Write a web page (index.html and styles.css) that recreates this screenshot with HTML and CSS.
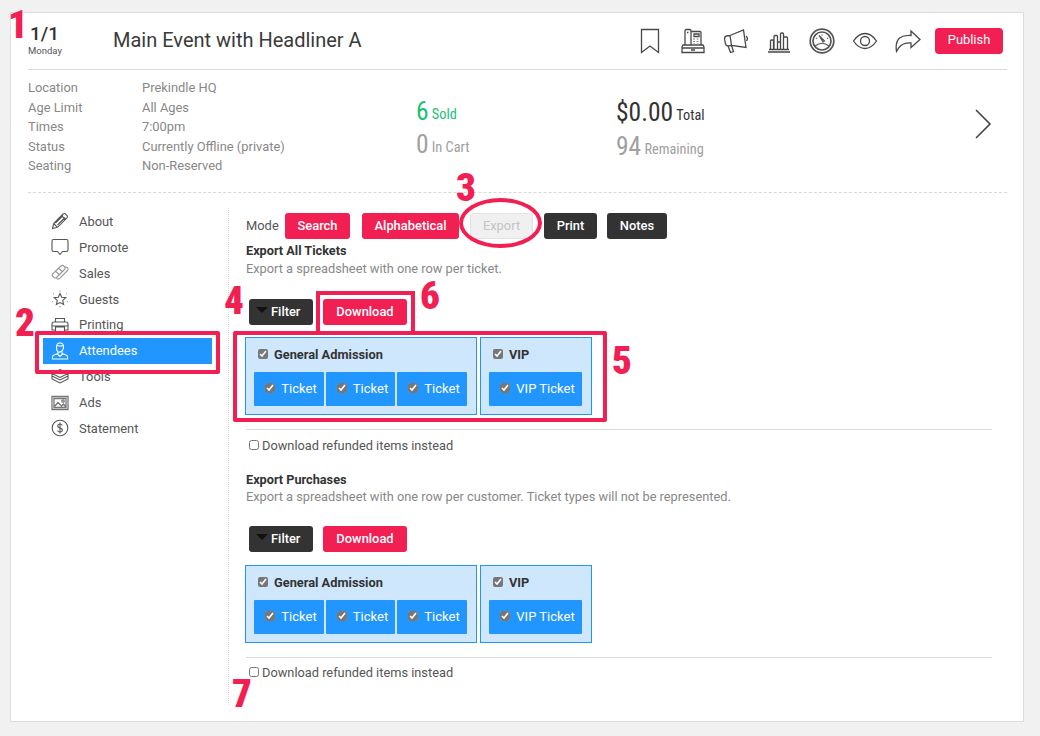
FILE: index.html
```html
<!DOCTYPE html>
<html lang="en">
<head>
<meta charset="utf-8">
<title>Main Event with Headliner A</title>
<link rel="stylesheet" href="styles.css">
</head>
<body>
<div class="card">
  <header class="head">
    <div class="date"><div class="date-num">1/1</div><div class="date-day">Monday</div></div>
    <h1 class="title">Main Event with Headliner A</h1>
    <div class="tools">
      <svg class="ico" viewBox="0 0 26 26"><path d="M4.500 1.500h17v23l-8.500-6.500-8.500 6.500z"/></svg>
      <svg class="ico" viewBox="0 0 26 26"><path d="M5 17V3q0-1.500 1.500-1.500h3Q11 1.500 11 3v14M11 3.500h9q1 0 1 1V17M3 17h20l1 2v5.500H2V19zM2 20h22M14 6h5v2.500h-5zM7 4.500h1.500M11 22h4"/><path class="dots" d="M13 11h2m1.500 0h2M13 13.500h2m1.500 0h2M13 16h2m1.500 0h2"/></svg>
      <svg class="ico" viewBox="0 0 26 26"><path d="M1.500 10.500q0-2 2-2.500l3.500-.5 1.500 10-3.500.5q-2 0-2.500-2zM7 7.500L20.500 2l2.500 17.500-14.500-2zM23 8q2.500 2 .5 5M5 18l2.500 6.500 3-1-2-6"/></svg>
      <svg class="ico" viewBox="0 0 26 26"><path d="M2 24h22M4.500 21v-8q0-1 1-1h1q1 0 1 1v8M8 21V8.500q0-1 1-1h1.500q1 0 1 1V21M11.500 14h2q1 0 1 1v6M14.500 21V6q0-1 1-1h1q1 0 1 1v15M17.500 9h3q1 0 1 1v11M3 21.500h20"/></svg>
      <svg class="ico gauge" viewBox="0 0 26 26"><circle cx="13" cy="13" r="11.800"/><circle cx="13" cy="13" r="9"/><path class="thin" d="M6 18q7-5.500 14 0M10 7.500l4 6.500 1.500-1zM7 10l1 .6M19 10l-1 .6M13 6.500v1"/></svg>
      <svg class="ico" viewBox="0 0 26 26"><path d="M1.500 13Q6.500 5.500 13 5.500T24.500 13Q19.500 20.500 13 20.500T1.500 13z"/><circle cx="13" cy="13" r="4.500"/></svg>
      <svg class="ico" viewBox="0 0 26 26"><path d="M16 3l9 8.500-9 8v-4.500q-8-.5-12 4.500l-2.500 4q-1.500-9 3-13.500Q9 7 16 7.500z"/></svg>
      <button class="btn btn-red publish">Publish</button>
    </div>
  </header>

  <section class="info">
    <dl class="facts">
      <dt>Location</dt><dd>Prekindle HQ</dd>
      <dt>Age Limit</dt><dd>All Ages</dd>
      <dt>Times</dt><dd>7:00pm</dd>
      <dt>Status</dt><dd>Currently Offline (private)</dd>
      <dt>Seating</dt><dd>Non-Reserved</dd>
    </dl>
    <div class="stats stats-a">
      <div class="stat green"><b>6</b> <span>Sold</span></div>
      <div class="stat grey"><b>0</b> <span>In Cart</span></div>
    </div>
    <div class="stats stats-b">
      <div class="stat dark"><b>$0.00</b> <span>Total</span></div>
      <div class="stat grey"><b>94</b> <span>Remaining</span></div>
    </div>
    <svg class="chev" viewBox="0 0 18 30"><path d="M2 1l14 14L2 29"/></svg>
  </section>

  <div class="body">
    <nav class="side">
      <a class="nav"><svg class="nico" viewBox="0 0 18 18"><path d="M1.500 16.500l1.200-5L12 2q1.300-1 2.500 0l1.500 1.500q1 1.200 0 2.500l-9.500 9.300zM2.700 11.500l3.800 3.800M10.500 3.500l4 4M4.500 11l7.500-7.500M6.500 13l7.500-7.500"/></svg>About</a>
      <a class="nav"><svg class="nico" viewBox="0 0 18 18"><path d="M2.500 1.500h13q1.500 0 1.500 1.500v9q0 1.500-1.500 1.500h-4L9 16.500l-2.500-3h-4Q1 13.500 1 12V3q0-1.500 1.500-1.500z"/></svg>Promote</a>
      <a class="nav muted"><svg class="nico" viewBox="0 0 18 18"><path d="M1.500 10L10 2q1.500-1.200 2.800 0l.7.7q1.300 1.300 0 2.800L5.500 13.500q-1.300 1-2.500 0L1.500 12q-.8-1 0-2zM5.500 13.800q1 2 2.800 1l8.200-8.300q1.200-1.300 0-2.800L14 2.800M4.500 7l4 4M7.500 4l4 4"/></svg>Sales</a>
      <a class="nav"><svg class="nico" viewBox="0 0 18 18"><path d="M9 3.500l1.700 3.700 4.100.5-3.100 2.700.9 4L9 12.500l-3.600 1.900.9-4-3.100-2.700 4.100-.5z"/><path class="dots" d="M9 .5v1.200M15.800 3.500l-.9.9M2.200 3.500l.9.9M.8 12l1.100-.3M17.200 12l-1.100-.3M9 16v1.500"/></svg>Guests</a>
      <a class="nav"><svg class="nico" viewBox="0 0 18 18"><path d="M4.500 6V2.500h9V6M4.500 14H1V8q0-2 2-2h12q2 0 2 2v6h-3.500M4.500 11h9v6h-9zM1 10h16"/></svg>Printing</a>
      <a class="nav active"><svg class="nico" viewBox="0 0 18 18"><path d="M5.500 5q0-4 3.500-4t3.500 4-3.500 5-3.500-5zM5.800 3.500q3.200 1 6.400 0M7 9.500v2l-4 1.500q-1.500.5-1.500 2v2h15v-2q0-1.500-1.500-2l-4-1.500v-2M6.500 12L9 14.500l2.500-2.500"/></svg>Attendees</a>
      <a class="nav"><svg class="nico" viewBox="0 0 18 18"><path d="M9 1.500L17 5.500 9 9.500 1 5.500zM1 5.500v2.500l8 4 8-4V5.500M1 8v3l8 4 8-4V8"/></svg>Tools</a>
      <a class="nav"><svg class="nico ads" viewBox="0 0 18 18"><path d="M1 2.500h16v13H1zM3 4.500h12v9H3zM3 13l4-4.500 3.500 3.500 2-2L15 13"/><circle cx="12" cy="7" r="1.200"/></svg>Ads</a>
      <a class="nav"><svg class="nico" viewBox="0 0 18 18"><circle cx="9" cy="9" r="7.800"/><path d="M11.300 6.500Q11 5 9 5T6.700 6.700 9 9t2.400 2.300T9 13t-2.400-1.500M9 3.500v11"/></svg>Statement</a>
    </nav>

    <main class="main">
      <div class="mode">
        <span class="mode-label">Mode</span>
        <button class="btn btn-red m-search">Search</button>
        <button class="btn btn-red m-alpha">Alphabetical</button>
        <button class="btn btn-off m-export">Export</button>
        <button class="btn btn-dark m-print">Print</button>
        <button class="btn btn-dark m-notes">Notes</button>
      </div>

      <section class="block">
        <h2 class="b-title">Export All Tickets</h2>
        <p class="b-desc">Export a spreadsheet with one row per ticket.</p>
        <div class="actions">
          <button class="btn btn-dark filter"><i class="caret"></i>Filter</button>
          <button class="btn btn-red download">Download</button>
        </div>
        <div class="groups">
          <div class="group ga">
            <label class="g-head"><input type="checkbox" checked>General Admission</label>
            <div class="tickets">
              <label class="ticket t1"><input type="checkbox" checked>Ticket</label>
              <label class="ticket t2"><input type="checkbox" checked>Ticket</label>
              <label class="ticket t3"><input type="checkbox" checked>Ticket</label>
            </div>
          </div>
          <div class="group vip">
            <label class="g-head"><input type="checkbox" checked>VIP</label>
            <div class="tickets">
              <label class="ticket t4"><input type="checkbox" checked>VIP Ticket</label>
            </div>
          </div>
        </div>
        <label class="refund"><input type="checkbox">Download refunded items instead</label>
      </section>

      <section class="block">
        <h2 class="b-title">Export Purchases</h2>
        <p class="b-desc">Export a spreadsheet with one row per customer. Ticket types will not be represented.</p>
        <div class="actions">
          <button class="btn btn-dark filter"><i class="caret"></i>Filter</button>
          <button class="btn btn-red download">Download</button>
        </div>
        <div class="groups">
          <div class="group ga">
            <label class="g-head"><input type="checkbox" checked>General Admission</label>
            <div class="tickets">
              <label class="ticket t1"><input type="checkbox" checked>Ticket</label>
              <label class="ticket t2"><input type="checkbox" checked>Ticket</label>
              <label class="ticket t3"><input type="checkbox" checked>Ticket</label>
            </div>
          </div>
          <div class="group vip">
            <label class="g-head"><input type="checkbox" checked>VIP</label>
            <div class="tickets">
              <label class="ticket t4"><input type="checkbox" checked>VIP Ticket</label>
            </div>
          </div>
        </div>
        <label class="refund"><input type="checkbox">Download refunded items instead</label>
      </section>
    </main>
  </div>
</div>

<div class="mark box-nav"></div>
<div class="mark box-dl"></div>
<div class="mark box-groups"></div>
<div class="mark ring"></div>
<span class="num n1">1</span>
<span class="num n2">2</span>
<span class="num n3">3</span>
<span class="num n4">4</span>
<span class="num n5">5</span>
<span class="num n6">6</span>
<span class="num n7">7</span>
</body>
</html>
```

FILE: styles.css
```css
* { box-sizing: border-box; }
html, body { margin: 0; height: 100%; }
body {
  position: relative;
  background: #f1f1f1;
  padding: 12px 0 0 10px;
  font-family: Roboto, "Liberation Sans", sans-serif;
  font-size: 12.900px;
  color: #444;
  overflow: hidden;
}
.card {
  width: 1014px;
  height: 710px;
  background: #fff;
  border: 1px solid #dcdcdc;
  padding: 0 16px 0 17px;
}
.head {
  height: 57px;
  padding-bottom: 3px;
  border-bottom: 1px solid #d9d9d9;
  display: flex;
  align-items: center;
}
.date { width: 85px; padding-top: 3px; }
.date-num { font-size: 19px; font-weight: 500; color: #333; line-height: 19px; padding-left: 2px; }
.date-day { font-size: 9.500px; color: #555; line-height: 16px; }
.title { margin: 0; font-size: 20px; font-weight: 400; color: #3a3a3a; }
.tools { margin-left: auto; display: flex; align-items: center; gap: 17px; padding: 2px 4px 0 0; }
.ico { width: 26px; height: 26px; fill: none; stroke: #484848; stroke-width: 1.300; }
.ico .dots, .nico .dots { stroke-width: 1; stroke: #888; }
.gauge { stroke-width: 1.700; stroke: #555; }
.gauge .thin { stroke-width: 1.200; }
.btn {
  font: 500 12.900px Roboto, "Liberation Sans", sans-serif;
  height: 26px;
  border: 0;
  border-radius: 3px;
  padding: 0 0 2px;
  color: #fff;
}
.btn-red { background: #f21f53; }
.btn-dark { background: #333; }
.btn-off { background: #f0f0f0; color: #c4c4c4; border: 1px solid #e2e2e2; }
.publish { width: 68px; margin-left: -3px; font-weight: 400; border-radius: 4px; }

.info {
  height: 123px;
  border-bottom: 1px dashed #d8d8d8;
  display: flex;
  position: relative;
}
.facts {
  margin: 8px 0 0;
  width: 388px;
  height: 98px;
  display: grid;
  grid-template-columns: 114px 1fr;
  grid-auto-rows: 19.500px;
  line-height: 19.500px;
  color: #888;
}
.facts dt, .facts dd { margin: 0; }
.stats { display: flex; flex-direction: column; }
.stats-a { width: 200px; padding-top: 26px; gap: 3px; }
.stats-b { padding-top: 27px; gap: 4px; }
.stat { height: 30px; line-height: 30px; white-space: nowrap; }
.stat b { font-size: 25.500px; font-weight: 400; font-stretch: 75%; }
.stat span { font-size: 14.300px; font-stretch: 80%; vertical-align: 1px; }
.green { color: #1cbf72; }
.grey { color: #a0a0a0; }
.dark { color: #333; }
.chev { position: absolute; right: 15px; top: 39px; width: 18px; height: 30px; fill: none; stroke: #444; stroke-width: 1.600; }

.body { display: flex; margin-top: 15px; height: 497px; }
.side { width: 201px; padding: 0.400px 0 0 15px; border-right: 1px dotted #d8d8d8; }
.nav {
  display: flex;
  align-items: center;
  width: 169px;
  height: 25.900px;
  padding-left: 8px;
  color: #555;
}
.nico { width: 18px; height: 18px; margin-right: 10px; fill: none; stroke: #555; stroke-width: 1.100; flex: none; }
.muted .nico { stroke: #999; }
.ads { stroke: #777; stroke-width: 1.300; }
.active { background: #2196ff; color: #fff; }
.active .nico { stroke: #fff; }

.main { padding: 5px 15px 0 17px; flex: 1; }
.mode { display: flex; align-items: center; height: 26px; }
.mode-label { width: 39px; color: #555; padding-bottom: 1px; }
.m-search { width: 65px; }
.m-alpha { width: 97px; margin-left: 12px; }
.m-export { width: 63px; margin-left: 11px; font-weight: 400; }
.m-print { width: 53px; margin-left: 11px; }
.m-notes { width: 60px; margin-left: 10px; }

.block { height: 212px; margin-bottom: 16px; margin-top: 3px; }
.block + .block { margin-top: 0; }
.b-title { margin: 0; font-size: 12.700px; font-weight: 700; color: #333; line-height: 18px; }
.block + .block .b-title { padding-top: 1px; }
.b-desc { margin: 0; color: #888; line-height: 18px; font-size: 12.800px; }
.block + .block .b-desc { margin-top: -1px; }
.actions { margin: 21px 0 12px 3px; display: flex; gap: 10px; height: 26px; }
.block + .block .actions { margin: 20px 0 13px 3px; }
.filter { width: 64px; display: flex; align-items: center; padding-left: 7px; gap: 3px; }
.caret { width: 0; height: 0; border: 6px solid transparent; border-top: 6px solid #111; border-bottom: 0; margin-top: -2px; }
.download { width: 84px; }
.groups { display: flex; gap: 3px; margin-left: -1px; height: 78px; }
.group { background: #cfe7fd; border: 1px solid #2196f3; padding: 0 0 0 8px; height: 78px; }
.ga { width: 232px; }
.vip { width: 112px; }
.g-head { display: flex; align-items: center; height: 34px; padding: 0 0 2px 4px; font-weight: 700; font-size: 12.800px; color: #333; }
.g-head input, .ticket input { appearance: auto; width: 10px; height: 10px; margin: 0 6px 0 0; accent-color: #777; }
.tickets { display: flex; gap: 2px; }
.ticket { height: 34px; padding: 0 0 2px 4px; background: #2196ff; color: #fff; border-radius: 1px; display: flex; align-items: center; justify-content: center; font-size: 13px; }
.t1 { width: 70px; }
.t2 { width: 69px; }
.t3 { width: 70px; }
.t4 { width: 93px; }
.refund {
  display: flex;
  align-items: center;
  margin-top: 14px;
  border-top: 1px solid #d9d9d9;
  padding: 5px 0 0 3px;
  height: 26px;
  color: #555;
  font-size: 12.800px;
}
.block + .block .refund { padding-top: 3px; }
.refund input { width: 10px; height: 10px; margin: 0 3px 0 0; }

.mark { position: absolute; border: 4px solid #f21f53; }
.box-nav { left: 35px; top: 331px; width: 185px; height: 43px; border-radius: 2px; }
.box-dl { left: 316px; top: 291px; width: 99px; height: 44px; }
.box-groups { left: 233px; top: 331px; width: 374px; height: 91px; border-radius: 2px; }
.ring { left: 459px; top: 198px; width: 83px; height: 50px; border-radius: 50%; }
.num {
  position: absolute;
  font-family: Roboto, "Liberation Sans", sans-serif;
  font-weight: 900;
  font-stretch: 75%;
  font-size: 39px;
  line-height: 30px;
  color: #f21f53;
}
.n1 { left: 8px; top: 10px; }
.n2 { left: 15px; top: 308px; }
.n3 { left: 456px; top: 173px; }
.n4 { left: 224px; top: 286px; }
.n5 { left: 612px; top: 346px; }
.n6 { left: 420px; top: 281px; }
.n7 { left: 232px; top: 679px; }
```
